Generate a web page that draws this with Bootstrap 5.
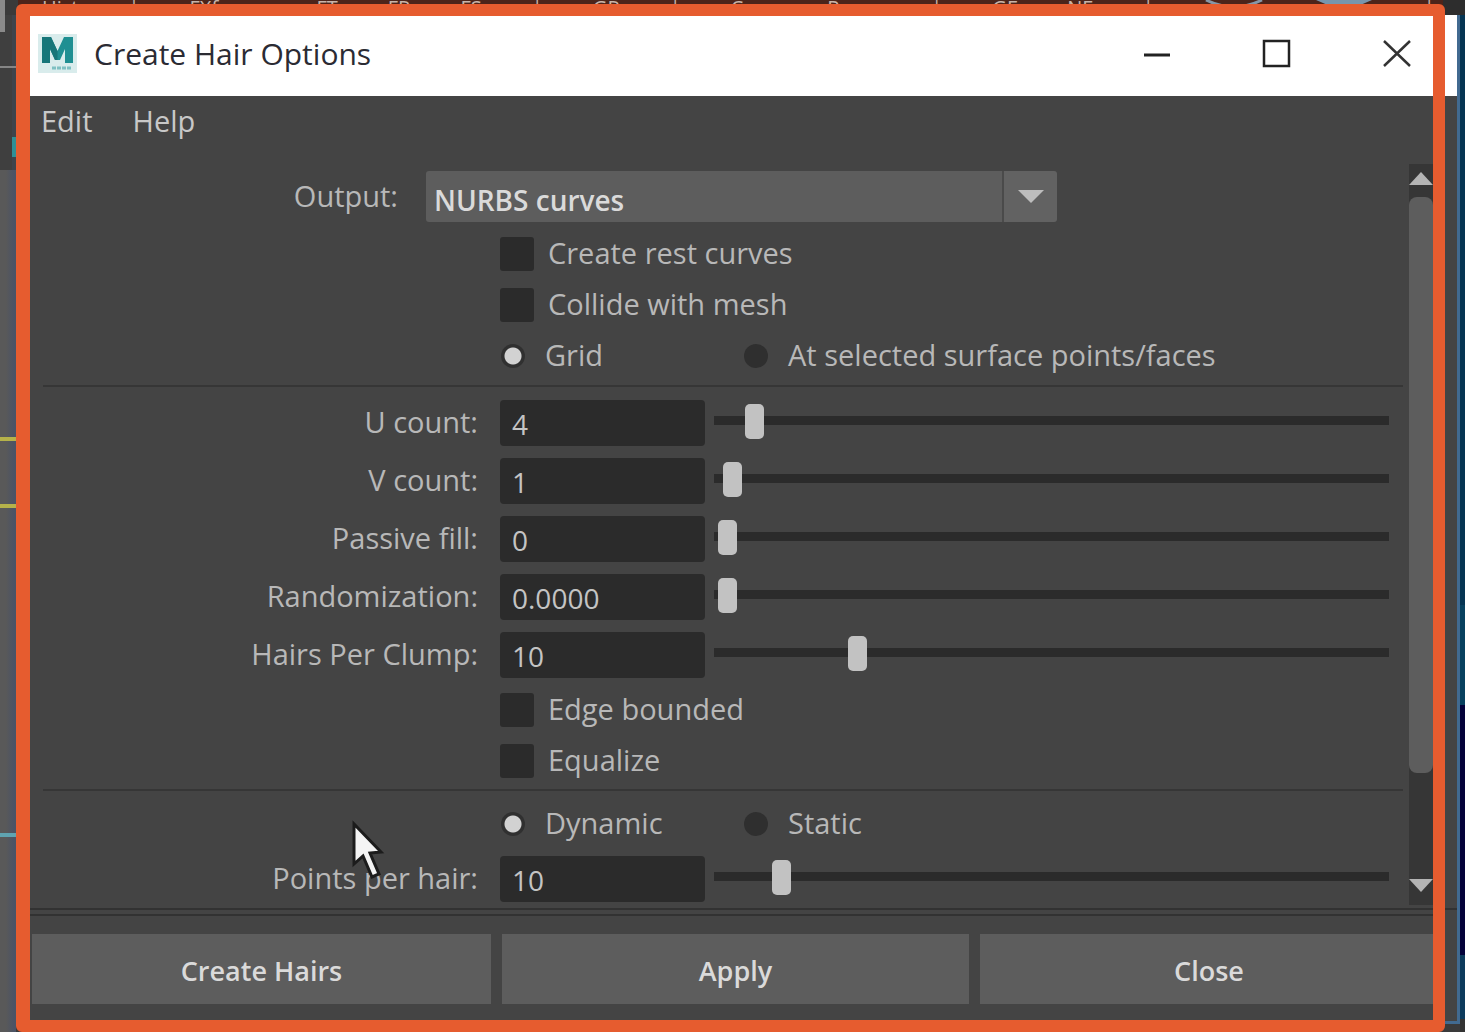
<!DOCTYPE html>
<html lang="en">
<head>
<meta charset="utf-8">
<meta name="viewport" content="width=device-width, initial-scale=1">
<title>Create Hair Options</title>
<link href="https://cdn.jsdelivr.net/npm/bootstrap@5.3.0/dist/css/bootstrap.min.css" rel="stylesheet">
<script src="https://cdn.jsdelivr.net/npm/bootstrap@5.3.0/dist/js/bootstrap.bundle.min.js"></script>
<style>
  :root { --panel: #444444; --well: #2b2b2b; --raised: #5d5d5d; --ink: #b8b8b8; --ink-strong: #dadada; --mark: #e65c2f; }
  body { background: #3a3a3a; color: var(--ink); font-family: "Open Sans", "Noto Sans", sans-serif; font-size: 29px; line-height: 36px; }
  button, input, select { font-family: inherit; }

  /* host application behind the dialog */
  .host-bar { height: 15px; background: linear-gradient(90deg, #8a8a8a 5px, #3a3a3a 5px 18px, #4c241a 18px calc(100% - 22px), #2d2d2d calc(100% - 22px)); color: #c8b4aa; font-size: 20px; line-height: 15px; padding: 0 30px 0 42px; }
  .host-left { width: 16px; background:
      linear-gradient(#8a8a8a, #8a8a8a) 0 0 / 5px 17px,
      linear-gradient(#858585, #858585) 0 51px / 16px 2px,
      linear-gradient(#2f8f95, #2f8f95) 12px 122px / 4px 20px,
      linear-gradient(#b5b24a, #b5b24a) 0 422px / 16px 4px,
      linear-gradient(#b5b24a, #b5b24a) 0 489px / 16px 4px,
      linear-gradient(#5fa3b0, #5fa3b0) 0 818px / 16px 4px,
      linear-gradient(#3d444c, #3d444c) 12px 0 / 4px 155px,
      linear-gradient(#3f3f3f, #3f3f3f) 0 0 / 16px 155px,
      linear-gradient(90deg, #595959 6px, #4b5365 14px);
    background-repeat: no-repeat; }
  .host-right { width: 5px; background: linear-gradient(#063553 0 590px, #08415f 590px 690px, #04023a 690px 940px, #0d3b5c 940px 1004px, #333 1004px); }

  .dialog-win { background: var(--panel); border-right: 3px solid #416a90; border-bottom: 3px solid #416a90; }
  .win-edge { width: 12px; flex: none; }
  .highlight-frame { top: 4px; right: 20px; bottom: 0; left: 16px; border: 12px solid var(--mark); border-left-width: 14px; border-radius: 6px; pointer-events: none; z-index: 5; }

  .title-strip { height: 81px; background: #fff; color: #2b2b33; padding: 0 45px 4px 22px; font-size: 30px; gap: 17px; }
  .win-btn { border: 0; background: none; padding: 0; width: 30px; height: 30px; display: flex; }
  .win-btns { gap: 90px; }
  .menu-strip { height: 64px; padding: 6px 25px 20px; gap: 40px; }
  .menu-strip a { color: #c8c8c8; text-decoration: none; }

  .options-area { padding: 11px 0 0 27px; }
  .options-area label { padding-bottom: 2px; }
  .label-col { width: 435px; margin-right: 22px; text-align: right; flex: none; }
  .out-label { width: 355px; margin-right: 28px; text-align: right; flex: none; }
  .output-row { height: 51px; margin-bottom: 6px; }
  .combo { width: 631px; height: 51px; }
  .combo select { appearance: none; width: 100%; height: 100%; border: 0; border-radius: 3px; padding: 6px 60px 0 8px; color: var(--ink-strong); font-weight: 600; font-size: 28px;
    background: linear-gradient(90deg, transparent calc(100% - 55px), #4a4a4a calc(100% - 55px) calc(100% - 53px), #626262 calc(100% - 53px)), var(--raised); }
  .combo svg { right: 13px; top: 17px; pointer-events: none; }

  .tick-row { height: 51px; padding-left: 457px; gap: 14px; }
  .radio-row { height: 52px; padding-left: 458px; }
  .radio-first { width: 243px; }
  .radio-opt { gap: 20px; }
  .box-tick { appearance: none; width: 34px; height: 34px; background: var(--well); border-radius: 3px; margin: 0; }
  .dot-tick { appearance: none; width: 24px; height: 24px; background: #2f2f2f; border-radius: 50%; margin: 0; }
  .dot-tick:checked { background: radial-gradient(circle, #d2d2d2 8px, #303030 9px); }
  .box-tick:checked { background: var(--ink); }
  .split-rule { height: 2px; margin: 3px 0 7px; background: #363636; border: 0; opacity: 1; }

  .value-row { height: 58px; padding-right: 14px; }
  .value-box { width: 205px; height: 46px; border: 0; border-radius: 4px; background: var(--well); color: #c4c4c4; padding: 2px 12px 0; margin-right: 9px; flex: none; font-size: 28px; }
  .slide { appearance: none; flex: 1 1 0; min-width: 0; height: 36px; padding: 0 4px; margin: 0 0 3px; background: linear-gradient(var(--well), var(--well)) 0 12px / 100% 9px no-repeat; border-radius: 5px; }
  .slide::-webkit-slider-thumb { appearance: none; width: 19px; height: 35px; border-radius: 5px; background: #c2c2c2; }

  .scroll-rail { width: 24px; margin: 4px 0 3px 6px; background: #363636; }
  .scroll-rail button { border: 0; background: none; padding: 0 0 6px; height: 33px; display: flex; align-items: center; justify-content: center; }
  .scroll-grip { height: 576px; background: var(--raised); border-radius: 8px; }

  .foot { border-top: 2px solid #323232; padding: 4px 0 17px; }
  .foot-inner { border-top: 2px solid #323232; padding: 18px 7px 0 16px; display: grid; grid-template-columns: 459fr 467fr 458fr; gap: 11px; }
  .act-btn { height: 70px; border: 0; background: var(--raised); color: var(--ink-strong); font-size: 27px; font-weight: 600; padding: 4px 0 0; }
  .pointer { left: 350px; top: 818px; z-index: 6; pointer-events: none; }
</style>
</head>
<body class="min-vh-100 d-flex flex-column position-relative overflow-x-hidden">
  <div class="host-bar d-flex justify-content-between align-items-center">
    <span>Hist</span><span>|</span><span>FXforms</span><span>FT</span><span>FR</span><span>FS</span><span>|</span><span>GR</span><span>|</span><span>Cons</span><span>Props</span><span>|</span><span>GF</span><span>NF</span><span>|</span>
    <svg width="60" height="15" viewBox="0 0 60 15" aria-hidden="true"><path d="M2 0Q30 14 58 0" fill="none" stroke="#8597a8" stroke-width="3"/></svg>
    <svg width="60" height="15" viewBox="0 0 60 15" aria-hidden="true"><path d="M2 0H58L44 6H16Z" fill="#7795ad"/></svg>
    <span>|</span>
  </div>
  <div class="d-flex flex-grow-1">
    <div class="host-left flex-shrink-0"></div>
    <main class="dialog-win position-relative d-flex flex-column flex-grow-1 mb-2">
      <header class="title-strip d-flex align-items-center">
        <svg width="39" height="39" viewBox="0 0 39 39" aria-hidden="true">
          <rect width="39" height="39" fill="#d9ecec"/>
          <path d="M4 3H13L19.500 17 26 3H35V29H27V15L22 26H17L12 15V29H4Z" fill="#1f8f92"/>
          <path d="M4 3H13L19.500 17V26H17L12 15V29H4Z" fill="#177679"/>
          <path d="M14 34H34" stroke="#7fc0c2" stroke-width="3" stroke-dasharray="4 1"/>
        </svg>
        <span class="flex-grow-1">Create Hair Options</span>
        <div class="win-btns d-flex">
          <button class="win-btn" type="button" aria-label="Minimize"><svg width="30" height="30" viewBox="0 0 30 30"><path d="M2 16H28" stroke="#222" stroke-width="3"/></svg></button>
          <button class="win-btn" type="button" aria-label="Maximize"><svg width="30" height="30" viewBox="0 0 30 30"><rect x="2" y="2" width="25" height="25" fill="none" stroke="#222" stroke-width="2.500"/></svg></button>
          <button class="win-btn" type="button" aria-label="Close window"><svg width="30" height="30" viewBox="0 0 30 30"><path d="M2 2L28 27M28 2L2 27" stroke="#333" stroke-width="2.500"/></svg></button>
        </div>
      </header>
      <nav class="menu-strip d-flex align-items-center"><a href="#">Edit</a><a href="#">Help</a></nav>

      <div class="d-flex flex-grow-1">
        <form class="options-area flex-grow-1">
          <div class="output-row d-flex align-items-center">
            <label class="out-label" for="output">Output:</label>
            <div class="combo position-relative">
              <select id="output"><option>NURBS curves</option></select>
              <svg class="position-absolute" width="26" height="16" viewBox="0 0 26 16" aria-hidden="true"><path d="M0 2H26L13 15Z" fill="#bdbdbd"/></svg>
            </div>
          </div>
          <div class="tick-row d-flex align-items-center"><input class="box-tick" type="checkbox" id="rest"><label for="rest">Create rest curves</label></div>
          <div class="tick-row d-flex align-items-center"><input class="box-tick" type="checkbox" id="collide"><label for="collide">Collide with mesh</label></div>
          <div class="radio-row d-flex align-items-center">
            <div class="radio-first radio-opt d-flex align-items-center"><input class="dot-tick" type="radio" name="place" id="grid" checked><label for="grid">Grid</label></div>
            <div class="radio-opt d-flex align-items-center"><input class="dot-tick" type="radio" name="place" id="sel"><label for="sel">At selected surface points/faces</label></div>
          </div>
          <hr class="split-rule">
          <div class="value-row d-flex align-items-center"><label class="label-col" for="u">U count:</label><input class="value-box" id="u" type="text" value="4"><input class="slide" type="range" aria-label="U count" min="0" max="96" value="4"></div>
          <div class="value-row d-flex align-items-center"><label class="label-col" for="v">V count:</label><input class="value-box" id="v" type="text" value="1"><input class="slide" type="range" aria-label="V count" min="0" max="128" value="1"></div>
          <div class="value-row d-flex align-items-center"><label class="label-col" for="p">Passive fill:</label><input class="value-box" id="p" type="text" value="0"><input class="slide" type="range" aria-label="Passive fill" min="0" max="10" value="0"></div>
          <div class="value-row d-flex align-items-center"><label class="label-col" for="r">Randomization:</label><input class="value-box" id="r" type="text" value="0.0000"><input class="slide" type="range" aria-label="Randomization" min="0" max="1" step="any" value="0"></div>
          <div class="value-row d-flex align-items-center"><label class="label-col" for="h">Hairs Per Clump:</label><input class="value-box" id="h" type="text" value="10"><input class="slide" type="range" aria-label="Hairs Per Clump" min="0" max="50" value="10"></div>
          <div class="tick-row d-flex align-items-center"><input class="box-tick" type="checkbox" id="edge"><label for="edge">Edge bounded</label></div>
          <div class="tick-row d-flex align-items-center"><input class="box-tick" type="checkbox" id="eq"><label for="eq">Equalize</label></div>
          <hr class="split-rule">
          <div class="radio-row d-flex align-items-center">
            <div class="radio-first radio-opt d-flex align-items-center"><input class="dot-tick" type="radio" name="mode" id="dyn" checked><label for="dyn">Dynamic</label></div>
            <div class="radio-opt d-flex align-items-center"><input class="dot-tick" type="radio" name="mode" id="stat"><label for="stat">Static</label></div>
          </div>
          <div class="value-row d-flex align-items-center"><label class="label-col" for="pts">Points per hair:</label><input class="value-box" id="pts" type="text" value="10"><input class="slide" type="range" aria-label="Points per hair" min="0" max="120" value="10"></div>
        </form>
        <div class="scroll-rail d-flex flex-column flex-shrink-0">
          <button type="button" aria-label="Scroll up"><svg width="24" height="14" viewBox="0 0 24 14"><path d="M0 14L12 1L24 14Z" fill="#b4b4b4"/></svg></button>
          <div class="scroll-grip"></div>
          <button class="mt-auto" type="button" aria-label="Scroll down"><svg width="24" height="14" viewBox="0 0 24 14"><path d="M0 0H24L12 13Z" fill="#b4b4b4"/></svg></button>
        </div>
        <div class="ms-3 me-2"></div>
      </div>

      <footer class="foot d-flex">
        <div class="foot-inner flex-grow-1">
          <button class="act-btn" type="button">Create Hairs</button>
          <button class="act-btn" type="button">Apply</button>
          <button class="act-btn" type="button">Close</button>
        </div>
        <div class="win-edge"></div>
      </footer>
    </main>
    <div class="host-right flex-shrink-0"></div>
  </div>
  <div class="highlight-frame position-absolute"></div>
  <svg class="pointer position-absolute" width="38" height="64" viewBox="0 0 38 64" aria-hidden="true"><path d="M4 6V46L13 38L22 59L29 56L20 35L31 34Z" fill="#f4f4f4" stroke="#1c1c1c" stroke-width="3"/></svg>
</body>
</html>
